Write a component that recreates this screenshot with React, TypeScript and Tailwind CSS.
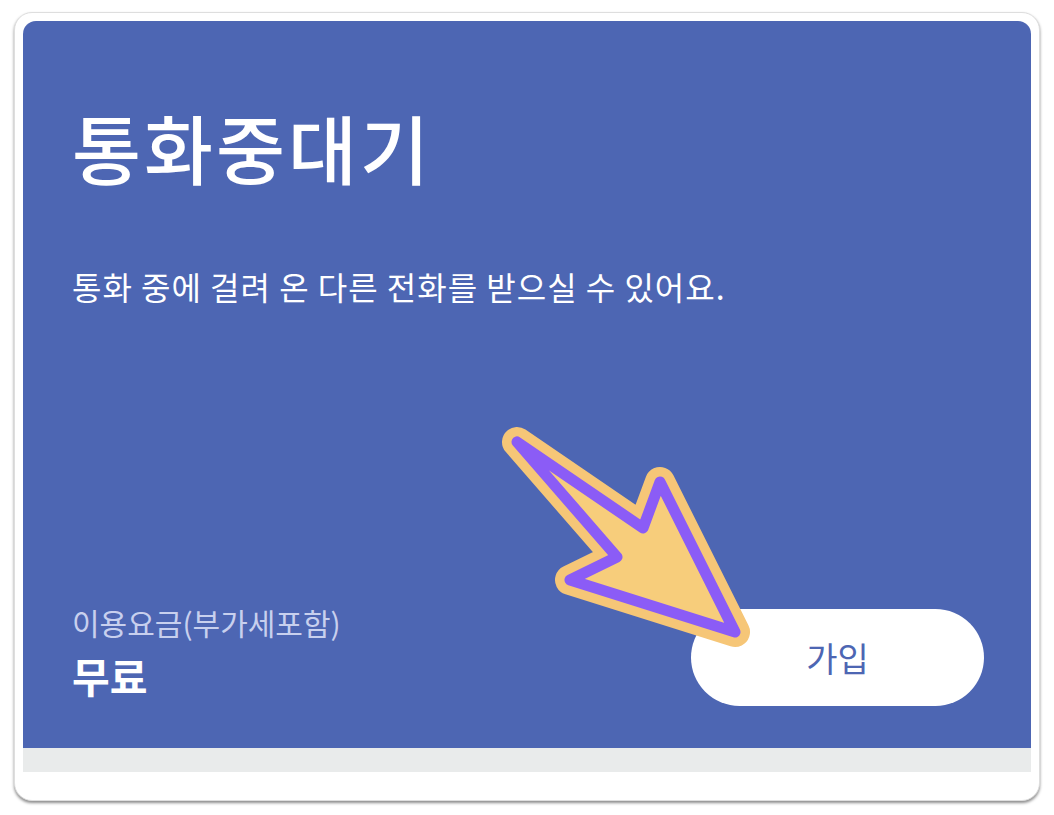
const font = { fontFamily: '"Noto Sans CJK KR", "Noto Sans", sans-serif' };

function Arrow() {
  const pts = '517,442 643,528 660,482 735,632 570,580 617,557';
  return (
    <svg className="pointer-events-none absolute left-0 top-0" width={1054} height={815} viewBox="0 0 1054 815">
      <polygon points={pts} fill="#f6c677" stroke="#f6c677" strokeWidth={30} strokeLinejoin="round" />
      <polygon points={pts} fill="#f7cd7b" stroke="#8b5cf6" strokeWidth={11} strokeLinejoin="round" />
    </svg>
  );
}

export default function App() {
  return (
    <div className="relative h-[815px] w-[1054px] bg-white" style={font}>
      <div className="absolute left-[14px] top-[12px] flex h-[789px] w-[1026px] flex-col rounded-[18px] border border-[#dedede] bg-white p-[8px] shadow-[0_2px_3px_rgba(0,0,0,0.45)]">
        <div className="flex h-[727px] flex-col justify-between rounded-t-[13px] bg-[#4d66b3] pl-[49px] pt-[88px]">
          <div>
            <h1 className="text-[75px] font-medium leading-none tracking-[3px] text-white">통화중대기</h1>
            <p className="mt-[86px] text-[32px] leading-none tracking-[1px] text-white">통화 중에 걸려 온 다른 전화를 받으실 수 있어요.</p>
          </div>
          <div className="flex items-end justify-between pb-[42px] pr-[47px]">
            <div className="mb-[10px] flex flex-col">
              <span className="text-[30px] leading-none text-[#c8d0ee]">이용요금(부가세포함)</span>
              <span className="mt-[18px] text-[41px] font-bold leading-none text-white">무료</span>
            </div>
            <button className="flex h-[97px] w-[293px] items-center justify-center rounded-full bg-white text-[34px] leading-none text-[#4d66b3]">
              가입
            </button>
          </div>
        </div>
        <div className="h-[24px] bg-[#e9ebeb]" />
      </div>
      <Arrow />
    </div>
  );
}
